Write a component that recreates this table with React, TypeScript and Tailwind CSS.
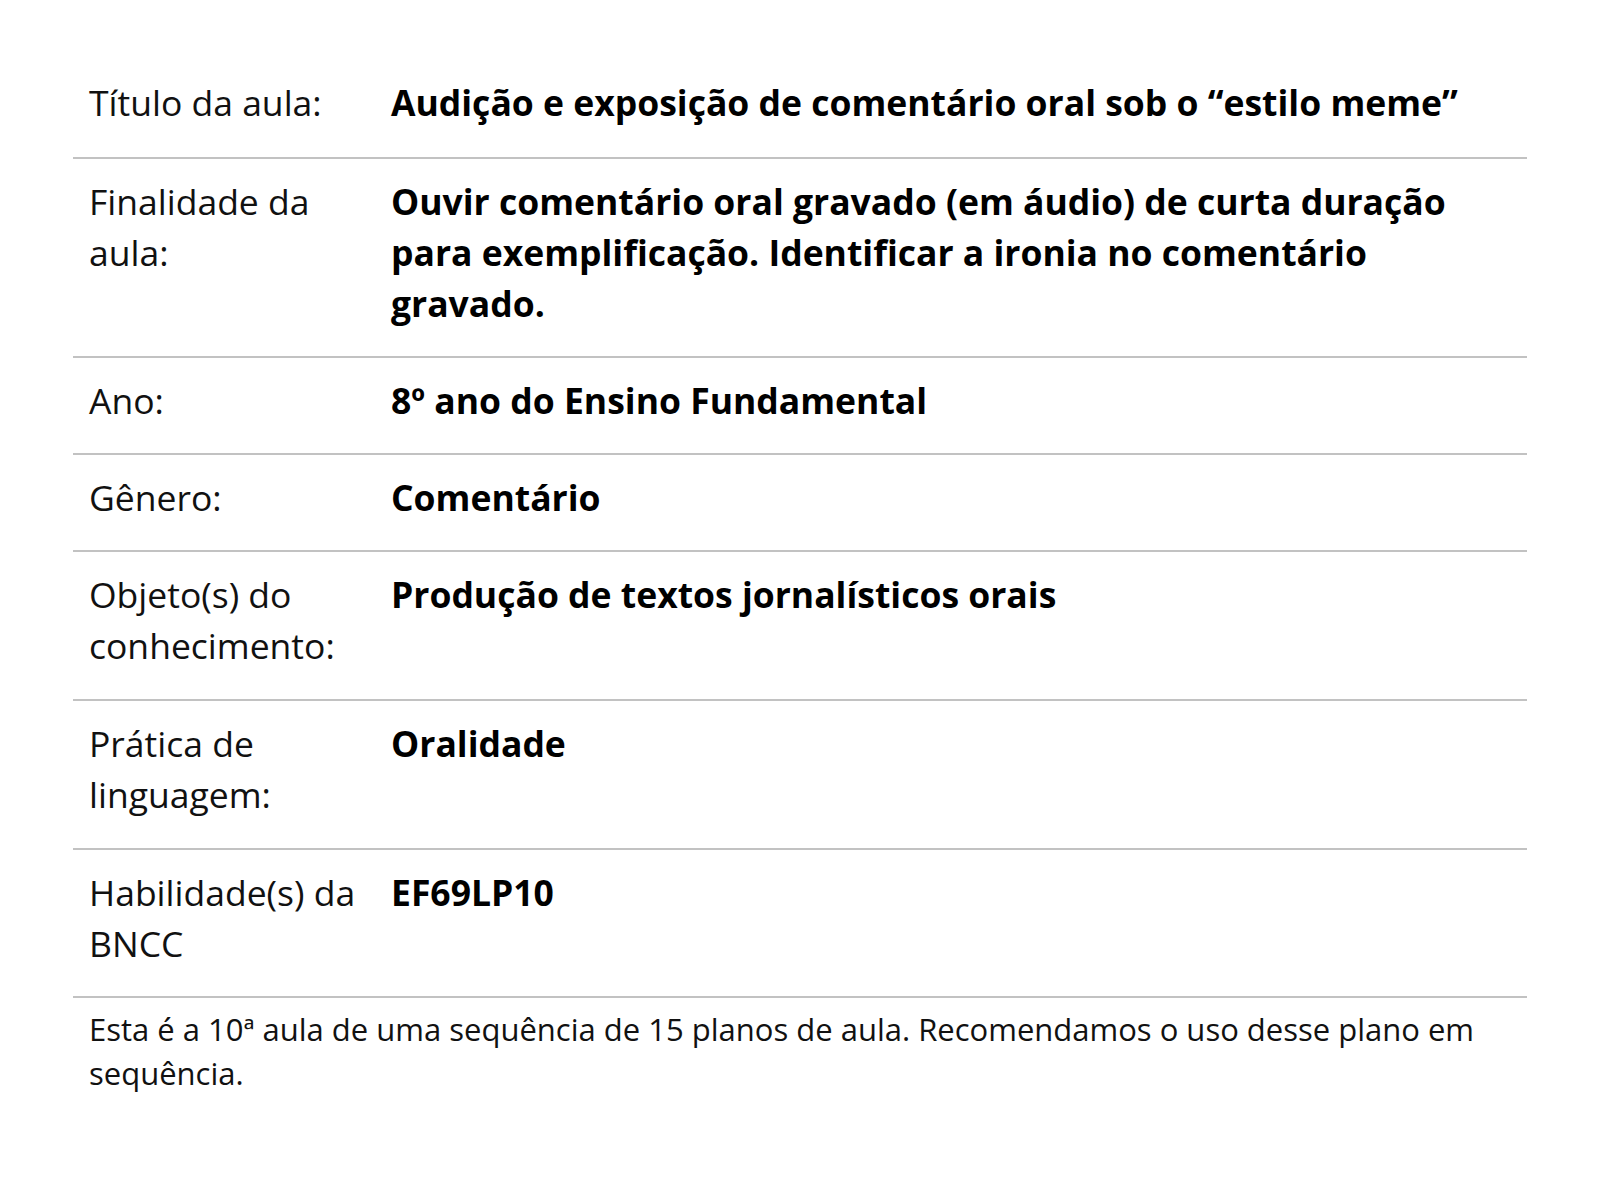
const rows: { label: string; value: string; extra: string }[] = [
  { label: "Título da aula:", value: "Audição e exposição de comentário oral sob o “estilo meme”", extra: "pb-[2px]" },
  {
    label: "Finalidade da aula:",
    value:
      "Ouvir comentário oral gravado (em áudio) de curta duração para exemplificação. Identificar a ironia no comentário gravado.",
    extra: "",
  },
  { label: "Ano:", value: "8º ano do Ensino Fundamental", extra: "" },
  { label: "Gênero:", value: "Comentário", extra: "" },
  { label: "Objeto(s) do conhecimento:", value: "Produção de textos jornalísticos orais", extra: "pb-[1px]" },
  { label: "Prática de linguagem:", value: "Oralidade", extra: "pb-[0.5px]" },
  { label: "Habilidade(s) da BNCC", value: "EF69LP10", extra: "pb-[0.5px]" },
];

export default function App() {
  return (
    <div
      className="min-h-screen bg-white px-[73px] pt-[60px] text-[#111]"
      style={{ fontFamily: '"Open Sans", "Noto Sans", sans-serif' }}
    >
      <div className="w-full">
        {rows.map((row) => (
          <div key={row.label} className={`grid grid-cols-[302px_1fr] border-b-2 border-[#c2c2c2] ${row.extra}`}>
            <div className="pl-[16px] pr-3 pt-[17px] pb-[27px] text-[35.5px] leading-[51px]">{row.label}</div>
            <div className="pl-[16px] pr-4 pt-[17px] pb-[27px] text-[35.5px] leading-[51px] font-bold text-black">
              {row.value}
            </div>
          </div>
        ))}
        <p className="pl-[16px] pr-4 pt-[9px] text-[31px] leading-[44px]">
          Esta é a 10ª aula de uma sequência de 15 planos de aula. Recomendamos o uso desse plano em sequência.
        </p>
      </div>
    </div>
  );
}
